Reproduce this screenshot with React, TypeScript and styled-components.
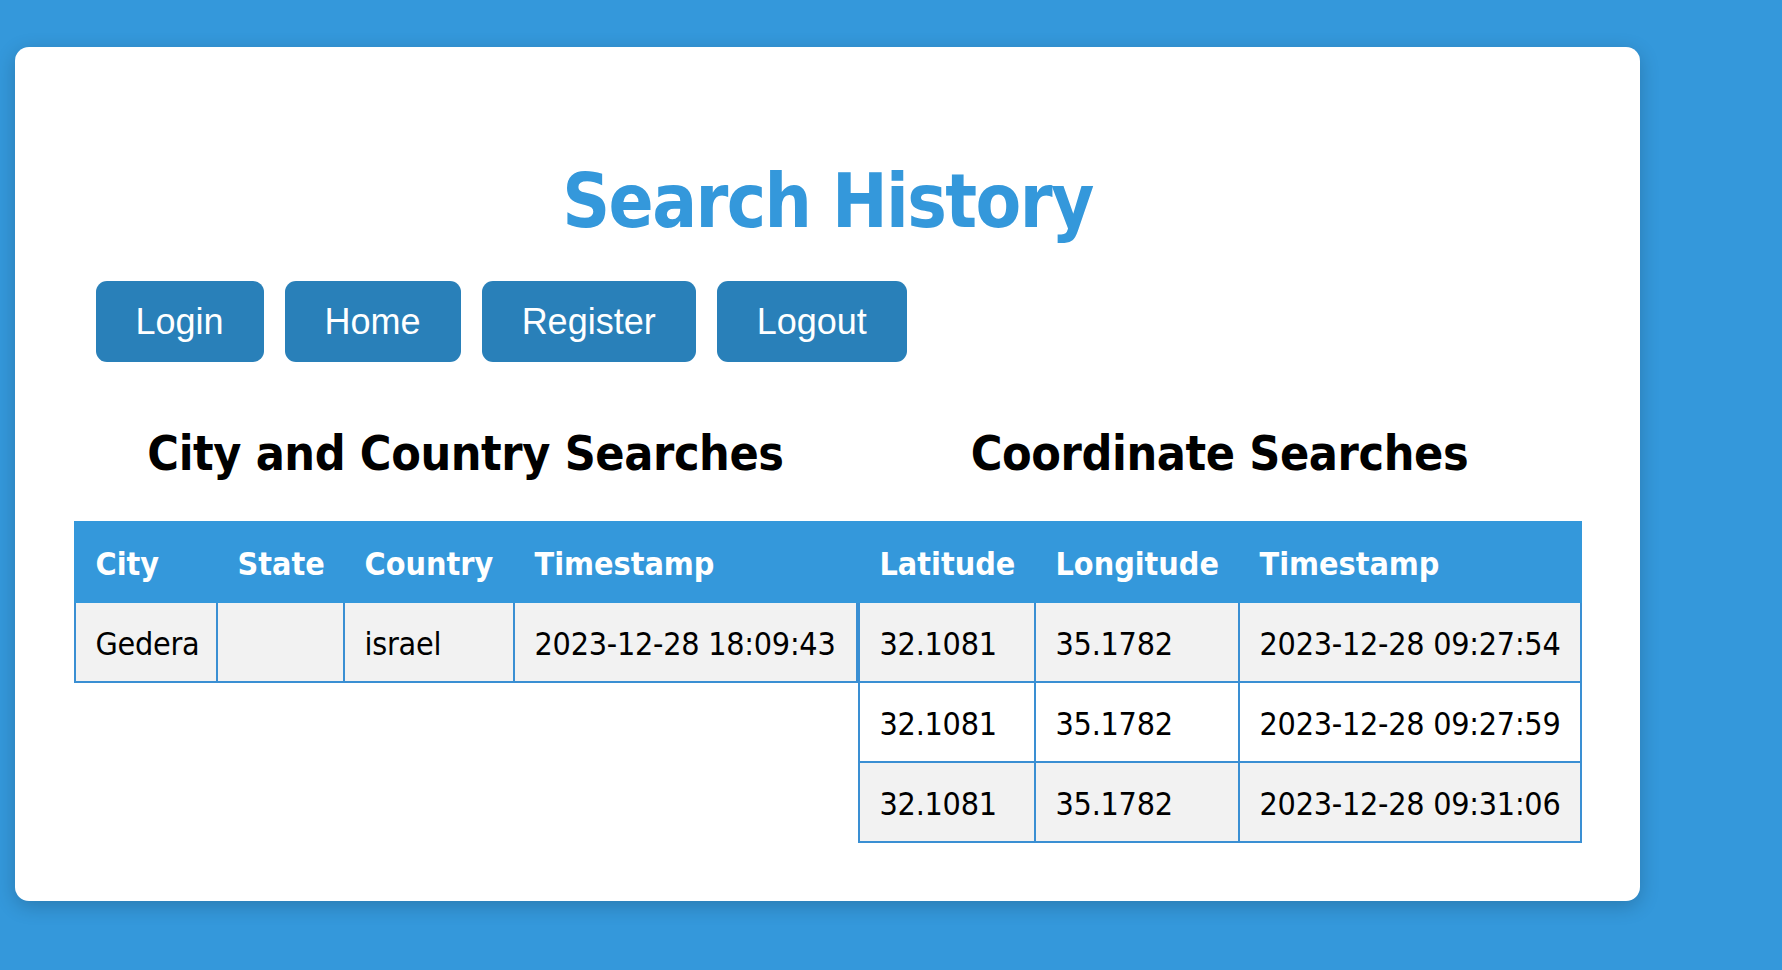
import React from "react";
import styled, { createGlobalStyle } from "styled-components";

const colors = {
  primary: "#3498db",
  button: "#2980b9",
  border: "#3a8fd3",
  stripe: "#f2f2f2",
};

const tahoma = `"DejaVu Sans Condensed", "DejaVu Sans", sans-serif`;

const GlobalStyle = createGlobalStyle`
  html, body {
    margin: 0;
    padding: 0;
    background: ${colors.primary};
  }
  body {
    height: 970px;
    overflow: hidden;
    font-family: ${tahoma};
    font-stretch: condensed;
  }
`;

interface Column {
  label: string;
  width: number;
}

const cityColumns: Column[] = [
  { label: "City", width: 142 },
  { label: "State", width: 127 },
  { label: "Country", width: 170 },
  { label: "Timestamp", width: 343 },
];

const cityRows = [["Gedera", "", "israel", "2023-12-28 18:09:43"]];

const coordColumns: Column[] = [
  { label: "Latitude", width: 176 },
  { label: "Longitude", width: 204 },
  { label: "Timestamp", width: 342 },
];

const coordRows = [
  ["32.1081", "35.1782", "2023-12-28 09:27:54"],
  ["32.1081", "35.1782", "2023-12-28 09:27:59"],
  ["32.1081", "35.1782", "2023-12-28 09:31:06"],
];

const navItems = ["Login", "Home", "Register", "Logout"];

// cell padding (20 + 20) plus the two collapsed half borders
const CELL_CHROME = 42;

const SearchTable: React.FC<{ title: string; columns: Column[]; rows: string[][] }> = ({
  title,
  columns,
  rows,
}) => {
  const total = columns.reduce((sum, c) => sum + c.width, 0);
  return (
    <Section>
      <SectionTitle>{title}</SectionTitle>
      <Table $w={total}>
        <thead>
          <tr>
            {columns.map((c, i) => (
              <HeadCell key={i} $w={c.width - CELL_CHROME}>
                {c.label}
              </HeadCell>
            ))}
          </tr>
        </thead>
        <tbody>
          {rows.map((row, r) => (
            <Row key={r} $striped={r % 2 === 0}>
              {row.map((cell, i) => (
                <Cell key={i}>{cell}</Cell>
              ))}
            </Row>
          ))}
        </tbody>
      </Table>
    </Section>
  );
};

const App: React.FC = () => {
  return (
    <>
      <GlobalStyle />
      <Card>
        <Title>Search History</Title>
        <Nav>
          {navItems.map((item) => (
            <NavButton key={item}>{item}</NavButton>
          ))}
        </Nav>
        <Tables>
          <SearchTable title="City and Country Searches" columns={cityColumns} rows={cityRows} />
          <SearchTable title="Coordinate Searches" columns={coordColumns} rows={coordRows} />
        </Tables>
      </Card>
    </>
  );
};

const Card = styled.div`
  box-sizing: border-box;
  margin: 47px 0 0 15px;
  width: 1625px;
  height: 854px;
  padding: 111px 40px 0 40px;
  background: #fff;
  border-radius: 14px;
  box-shadow: 0 5px 20px rgba(0, 0, 0, 0.2);
`;

const Title = styled.h1`
  margin: 0;
  text-align: center;
  color: ${colors.primary};
  font-size: 74px;
  font-weight: bold;
  line-height: 86px;
  letter-spacing: -1.6px;
`;

const Nav = styled.nav`
  display: flex;
  gap: 21px;
  margin-top: 37px;
  padding-left: 40.5px;
`;

const NavButton = styled.button`
  border: none;
  border-radius: 11px;
  background: ${colors.button};
  color: #fff;
  font-family: "Liberation Sans", Arial, sans-serif;
  font-size: 36px;
  line-height: 41px;
  padding: 20px 40px;
  cursor: pointer;
`;

const Tables = styled.div`
  display: flex;
  justify-content: center;
  align-items: flex-start;
  margin-top: 63px;
`;

const Section = styled.div`
  display: flex;
  flex-direction: column;
  align-items: center;
`;

const SectionTitle = styled.h2`
  margin: 0 0 40px 0;
  font-size: 48px;
  font-weight: bold;
  line-height: 56px;
  letter-spacing: -0.4px;
  color: #000;
  white-space: nowrap;
`;

const Table = styled.table<{ $w: number }>`
  width: ${(p) => p.$w}px;
  border-collapse: collapse;
  table-layout: fixed;
  font-size: 32px;
  line-height: 38px;
`;

const HeadCell = styled.th<{ $w: number }>`
  width: ${(p) => p.$w}px;
  padding: 22px 20px 18px 20px;
  text-align: left;
  background: ${colors.primary};
  color: #fff;
  font-weight: bold;
  border: 2px solid ${colors.primary};
  white-space: nowrap;
`;

const Row = styled.tr<{ $striped: boolean }>`
  background: ${(p) => (p.$striped ? colors.stripe : "#fff")};
`;

const Cell = styled.td`
  padding: 22px 18px 18px 20px;
  border: 2px solid ${colors.border};
  color: #000;
  white-space: nowrap;
  letter-spacing: -0.25px;
`;

export default App;
